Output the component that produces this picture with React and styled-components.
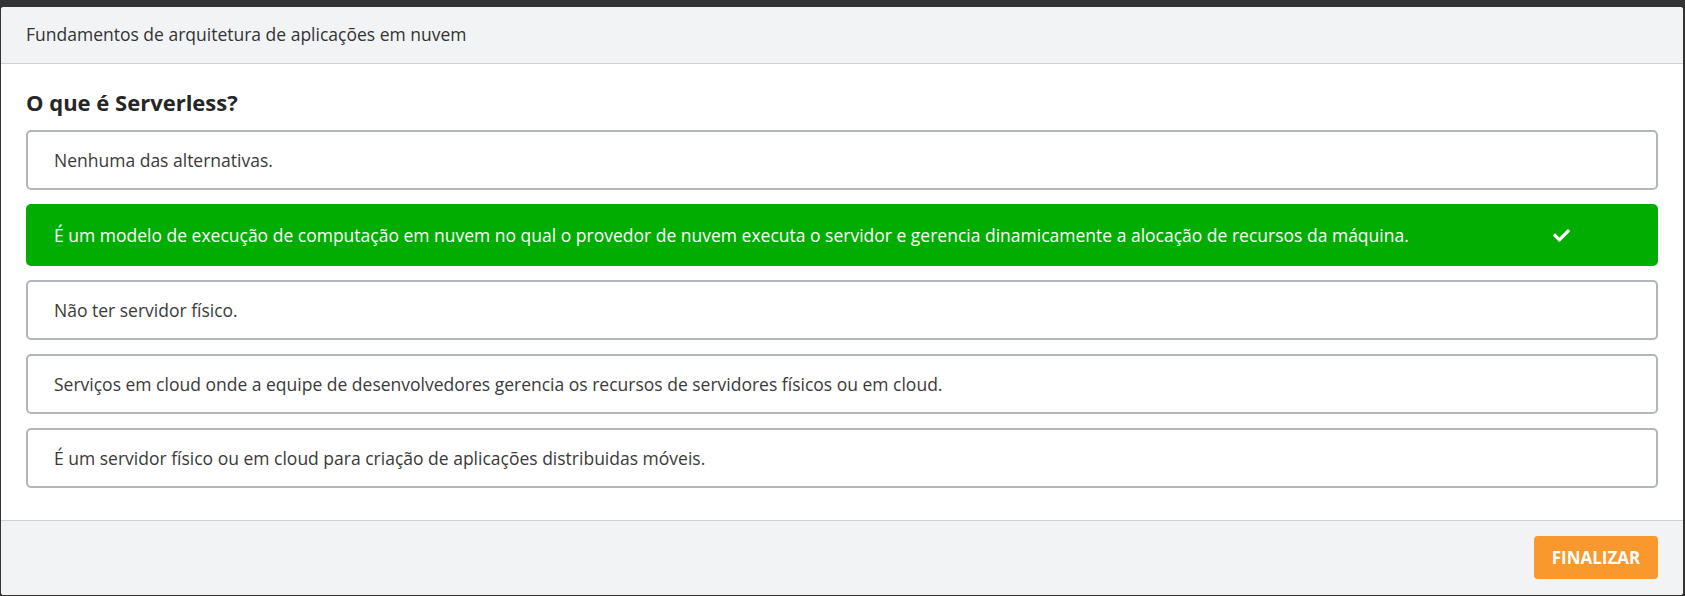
import React from "react";
import styled, { createGlobalStyle } from "styled-components";

const Global = createGlobalStyle`
  html, body { margin: 0; padding: 0; background: #333333; }
  body { font-family: "Open Sans", "Noto Sans", sans-serif; color: #333; }
  * { box-sizing: border-box; }
`;

const Page = styled.div`
  padding: 7px 2px 1px 1px;
  height: 596px;
`;

const Modal = styled.div`
  background: #fff;
  height: 588px;
  border-radius: 3px;
  display: flex;
  flex-direction: column;
  overflow: hidden;
`;

const Header = styled.div`
  height: 57px;
  background: #f2f3f5;
  border-bottom: 1px solid #cfd2d6;
  display: flex;
  align-items: center;
  padding: 0 25px 2px;
  font-size: 17.5px;
  color: #333;
`;

const Body = styled.div`
  flex: 1;
  padding: 23px 25px 0 25px;
`;

const Question = styled.h2`
  margin: 0 0 13px;
  font-size: 22px;
  font-weight: 700;
  line-height: 30px;
  color: #262626;
`;

const Options = styled.div`
  display: flex;
  flex-direction: column;
  gap: 14px;
`;

const Option = styled.div`
  display: flex;
  align-items: center;
  justify-content: space-between;
  min-height: ${(p) => (p.$selected ? "62px" : "60px")};
  padding: 0 86px 0 26px;
  border: 2px solid ${(p) => (p.$selected ? "#02ad02" : "#b0b6bc")};
  border-radius: 5px;
  background: ${(p) => (p.$selected ? "#02ad02" : "#fff")};
  color: ${(p) => (p.$selected ? "#fff" : "#3a3a3a")};
  font-size: 17.5px;
  cursor: pointer;
`;

const Check = styled.svg`
  width: 17px;
  height: 14px;
  flex: none;
`;

const Footer = styled.div`
  height: 75px;
  background: #f2f3f5;
  border-top: 1px solid #cfd2d6;
  display: flex;
  align-items: center;
  justify-content: flex-end;
  padding: 0 25px 1px 0;
`;

const Button = styled.button`
  height: 43px;
  width: 124px;
  border: none;
  border-radius: 4px;
  background: #f9982d;
  color: #fff;
  font-family: "Open Sans", "Noto Sans", sans-serif;
  font-weight: 700;
  font-size: 17px;
  text-transform: uppercase;
  cursor: pointer;
`;

const options = [
  "Nenhuma das alternativas.",
  "É um modelo de execução de computação em nuvem no qual o provedor de nuvem executa o servidor e gerencia dinamicamente a alocação de recursos da máquina.",
  "Não ter servidor físico.",
  "Serviços em cloud onde a equipe de desenvolvedores gerencia os recursos de servidores físicos ou em cloud.",
  "É um servidor físico ou em cloud para criação de aplicações distribuidas móveis.",
];

export default function App() {
  const selected = 1;
  return (
    <Page>
      <Global />
      <Modal>
        <Header>Fundamentos de arquitetura de aplicações em nuvem</Header>
        <Body>
          <Question>O que é Serverless?</Question>
          <Options>
            {options.map((o, i) => (
              <Option key={i} $selected={i === selected}>
                <span>{o}</span>
                {i === selected && (
                  <Check viewBox="0 0 512 420">
                    <path
                      fill="#fff"
                      d="M173.9 409.4L7.5 243c-10-10-10-26.2 0-36.2l36.2-36.2c10-10 26.2-10 36.2 0L192 282.7 432.1 42.6c10-10 26.2-10 36.2 0l36.2 36.2c10 10 10 26.2 0 36.2L210.1 409.4c-10 10-26.2 10-36.2 0z"
                    />
                  </Check>
                )}
              </Option>
            ))}
          </Options>
        </Body>
        <Footer>
          <Button>Finalizar</Button>
        </Footer>
      </Modal>
    </Page>
  );
}
